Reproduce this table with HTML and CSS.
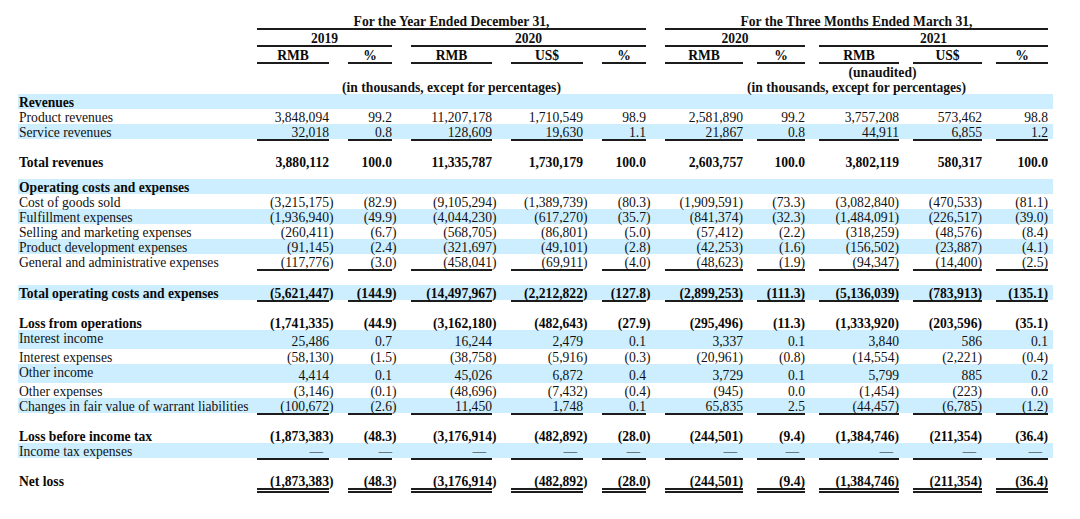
FILE: index.html
```html
<!DOCTYPE html>
<html lang="en">
<head>
<meta charset="utf-8">
<title>Consolidated Statements of Operations</title>
<link rel="stylesheet" href="styles.css">
</head>
<body>
<div class="sheet">
  <div class="hr hr1">
    <div class="hl"></div>
    <div class="hs span-year">For the Year Ended December 31,</div>
    <div class="hs span-quarter">For the Three Months Ended March 31,</div>
  </div>
  <div class="hr hr2">
    <div class="hl"></div>
    <div class="hs y2019">2019</div>
    <div class="hs y2020">2020</div>
    <div class="hs q2020">2020</div>
    <div class="hs q2021">2021</div>
  </div>
  <div class="r ul head">
    <div class="l"></div>
    <div class="v">RMB</div><div class="v">%</div><div class="v">RMB</div><div class="v">US$</div><div class="v">%</div>
    <div class="v">RMB</div><div class="v">%</div><div class="v">RMB</div><div class="v">US$</div><div class="v">%</div>
  </div>
  <div class="hr">
    <div class="hl"></div>
    <div class="hs span-year"></div>
    <div class="hs span-quarter unaudited">(unaudited)</div>
  </div>
  <div class="hr">
    <div class="hl"></div>
    <div class="hs span-year">(in thousands, except for percentages)</div>
    <div class="hs span-quarter">(in thousands, except for percentages)</div>
  </div>

  <div class="r band bold"><div class="l">Revenues</div></div>
  <div class="r">
    <div class="l">Product revenues</div>
    <div class="v">3,848,094</div><div class="v">99.2</div><div class="v">11,207,178</div><div class="v">1,710,549</div><div class="v">98.9</div>
    <div class="v">2,581,890</div><div class="v">99.2</div><div class="v">3,757,208</div><div class="v">573,462</div><div class="v">98.8</div>
  </div>
  <div class="r band ul">
    <div class="l">Service revenues</div>
    <div class="v">32,018</div><div class="v">0.8</div><div class="v">128,609</div><div class="v">19,630</div><div class="v">1.1</div>
    <div class="v">21,867</div><div class="v">0.8</div><div class="v">44,911</div><div class="v">6,855</div><div class="v">1.2</div>
  </div>
  <div class="sp sp13"></div>
  <div class="r bold">
    <div class="l">Total revenues</div>
    <div class="v">3,880,112</div><div class="v">100.0</div><div class="v">11,335,787</div><div class="v">1,730,179</div><div class="v">100.0</div>
    <div class="v">2,603,757</div><div class="v">100.0</div><div class="v">3,802,119</div><div class="v">580,317</div><div class="v">100.0</div>
  </div>
  <div class="sp sp10"></div>
  <div class="r band bold"><div class="l">Operating costs and expenses</div></div>
  <div class="r">
    <div class="l">Cost of goods sold</div>
    <div class="v">(3,215,175<span class="p">)</span></div><div class="v">(82.9<span class="p">)</span></div><div class="v">(9,105,294<span class="p">)</span></div><div class="v">(1,389,739<span class="p">)</span></div><div class="v">(80.3<span class="p">)</span></div>
    <div class="v">(1,909,591<span class="p">)</span></div><div class="v">(73.3<span class="p">)</span></div><div class="v">(3,082,840<span class="p">)</span></div><div class="v">(470,533<span class="p">)</span></div><div class="v">(81.1<span class="p">)</span></div>
  </div>
  <div class="r band">
    <div class="l">Fulfillment expenses</div>
    <div class="v">(1,936,940<span class="p">)</span></div><div class="v">(49.9<span class="p">)</span></div><div class="v">(4,044,230<span class="p">)</span></div><div class="v">(617,270<span class="p">)</span></div><div class="v">(35.7<span class="p">)</span></div>
    <div class="v">(841,374<span class="p">)</span></div><div class="v">(32.3<span class="p">)</span></div><div class="v">(1,484,091<span class="p">)</span></div><div class="v">(226,517<span class="p">)</span></div><div class="v">(39.0<span class="p">)</span></div>
  </div>
  <div class="r">
    <div class="l">Selling and marketing expenses</div>
    <div class="v">(260,411<span class="p">)</span></div><div class="v">(6.7<span class="p">)</span></div><div class="v">(568,705<span class="p">)</span></div><div class="v">(86,801<span class="p">)</span></div><div class="v">(5.0<span class="p">)</span></div>
    <div class="v">(57,412<span class="p">)</span></div><div class="v">(2.2<span class="p">)</span></div><div class="v">(318,259<span class="p">)</span></div><div class="v">(48,576<span class="p">)</span></div><div class="v">(8.4<span class="p">)</span></div>
  </div>
  <div class="r band">
    <div class="l">Product development expenses</div>
    <div class="v">(91,145<span class="p">)</span></div><div class="v">(2.4<span class="p">)</span></div><div class="v">(321,697<span class="p">)</span></div><div class="v">(49,101<span class="p">)</span></div><div class="v">(2.8<span class="p">)</span></div>
    <div class="v">(42,253<span class="p">)</span></div><div class="v">(1.6<span class="p">)</span></div><div class="v">(156,502<span class="p">)</span></div><div class="v">(23,887<span class="p">)</span></div><div class="v">(4.1<span class="p">)</span></div>
  </div>
  <div class="r ul">
    <div class="l">General and administrative expenses</div>
    <div class="v">(117,776<span class="p">)</span></div><div class="v">(3.0<span class="p">)</span></div><div class="v">(458,041<span class="p">)</span></div><div class="v">(69,911<span class="p">)</span></div><div class="v">(4.0<span class="p">)</span></div>
    <div class="v">(48,623<span class="p">)</span></div><div class="v">(1.9<span class="p">)</span></div><div class="v">(94,347<span class="p">)</span></div><div class="v">(14,400<span class="p">)</span></div><div class="v">(2.5<span class="p">)</span></div>
  </div>
  <div class="sp sp14"></div>
  <div class="r band ul bold">
    <div class="l">Total operating costs and expenses</div>
    <div class="v">(5,621,447<span class="p">)</span></div><div class="v">(144.9<span class="p">)</span></div><div class="v">(14,497,967<span class="p">)</span></div><div class="v">(2,212,822<span class="p">)</span></div><div class="v">(127.8<span class="p">)</span></div>
    <div class="v">(2,899,253<span class="p">)</span></div><div class="v">(111.3<span class="p">)</span></div><div class="v">(5,136,039<span class="p">)</span></div><div class="v">(783,913<span class="p">)</span></div><div class="v">(135.1<span class="p">)</span></div>
  </div>
  <div class="sp sp13"></div>
  <div class="r bold">
    <div class="l">Loss from operations</div>
    <div class="v">(1,741,335<span class="p">)</span></div><div class="v">(44.9<span class="p">)</span></div><div class="v">(3,162,180<span class="p">)</span></div><div class="v">(482,643<span class="p">)</span></div><div class="v">(27.9<span class="p">)</span></div>
    <div class="v">(295,496<span class="p">)</span></div><div class="v">(11.3<span class="p">)</span></div><div class="v">(1,333,920<span class="p">)</span></div><div class="v">(203,596<span class="p">)</span></div><div class="v">(35.1<span class="p">)</span></div>
  </div>
  <div class="r band tall">
    <div class="l">Interest income</div>
    <div class="v">25,486</div><div class="v">0.7</div><div class="v">16,244</div><div class="v">2,479</div><div class="v">0.1</div>
    <div class="v">3,337</div><div class="v">0.1</div><div class="v">3,840</div><div class="v">586</div><div class="v">0.1</div>
  </div>
  <div class="r">
    <div class="l">Interest expenses</div>
    <div class="v">(58,130<span class="p">)</span></div><div class="v">(1.5<span class="p">)</span></div><div class="v">(38,758<span class="p">)</span></div><div class="v">(5,916<span class="p">)</span></div><div class="v">(0.3<span class="p">)</span></div>
    <div class="v">(20,961<span class="p">)</span></div><div class="v">(0.8<span class="p">)</span></div><div class="v">(14,554<span class="p">)</span></div><div class="v">(2,221<span class="p">)</span></div><div class="v">(0.4<span class="p">)</span></div>
  </div>
  <div class="r band tall">
    <div class="l">Other income</div>
    <div class="v">4,414</div><div class="v">0.1</div><div class="v">45,026</div><div class="v">6,872</div><div class="v">0.4</div>
    <div class="v">3,729</div><div class="v">0.1</div><div class="v">5,799</div><div class="v">885</div><div class="v">0.2</div>
  </div>
  <div class="r">
    <div class="l">Other expenses</div>
    <div class="v">(3,146<span class="p">)</span></div><div class="v">(0.1<span class="p">)</span></div><div class="v">(48,696<span class="p">)</span></div><div class="v">(7,432<span class="p">)</span></div><div class="v">(0.4<span class="p">)</span></div>
    <div class="v">(945<span class="p">)</span></div><div class="v">0.0</div><div class="v">(1,454<span class="p">)</span></div><div class="v">(223<span class="p">)</span></div><div class="v">0.0</div>
  </div>
  <div class="r band ul">
    <div class="l">Changes in fair value of warrant liabilities</div>
    <div class="v">(100,672<span class="p">)</span></div><div class="v">(2.6<span class="p">)</span></div><div class="v">11,450</div><div class="v">1,748</div><div class="v">0.1</div>
    <div class="v">65,835</div><div class="v">2.5</div><div class="v">(44,457<span class="p">)</span></div><div class="v">(6,785<span class="p">)</span></div><div class="v">(1.2<span class="p">)</span></div>
  </div>
  <div class="sp sp13"></div>
  <div class="r bold">
    <div class="l">Loss before income tax</div>
    <div class="v">(1,873,383<span class="p">)</span></div><div class="v">(48.3<span class="p">)</span></div><div class="v">(3,176,914<span class="p">)</span></div><div class="v">(482,892<span class="p">)</span></div><div class="v">(28.0<span class="p">)</span></div>
    <div class="v">(244,501<span class="p">)</span></div><div class="v">(9.4<span class="p">)</span></div><div class="v">(1,384,746<span class="p">)</span></div><div class="v">(211,354<span class="p">)</span></div><div class="v">(36.4<span class="p">)</span></div>
  </div>
  <div class="r band ul dashes">
    <div class="l">Income tax expenses</div>
    <div class="v">—</div><div class="v">—</div><div class="v">—</div><div class="v">—</div><div class="v">—</div>
    <div class="v">—</div><div class="v">—</div><div class="v">—</div><div class="v">—</div><div class="v">—</div>
  </div>
  <div class="sp sp13"></div>
  <div class="r bold dbl">
    <div class="l">Net loss</div>
    <div class="v">(1,873,383<span class="p">)</span></div><div class="v">(48.3<span class="p">)</span></div><div class="v">(3,176,914<span class="p">)</span></div><div class="v">(482,892<span class="p">)</span></div><div class="v">(28.0<span class="p">)</span></div>
    <div class="v">(244,501<span class="p">)</span></div><div class="v">(9.4<span class="p">)</span></div><div class="v">(1,384,746<span class="p">)</span></div><div class="v">(211,354<span class="p">)</span></div><div class="v">(36.4<span class="p">)</span></div>
  </div>
</div>
</body>
</html>
```

FILE: styles.css
```css
* { box-sizing: border-box; }

html, body {
  margin: 0;
  padding: 0;
  background: #ffffff;
}

body {
  font-family: "Liberation Serif", "Times New Roman", serif;
  font-size: 13.6px;
  line-height: 15px;
  color: #111111;
}

.sheet {
  width: 1035px;
  margin: 13px 0 0 18px;
}

/* header rows with spanning titles */
.hr {
  display: flex;
  font-weight: bold;
  text-align: center;
  white-space: nowrap;
}
.hl { width: 239px; flex: none; }
.hs { flex: none; height: 15px; padding-top: 1px; }
.hr1 .hs, .hr2 .hs { border-bottom: 2px solid #1c1c1c; height: 17px; }
.span-year { width: 389px; }
.span-quarter { width: 383px; margin-left: 19px; }
.y2019 { width: 135px; }
.y2020 { width: 235px; margin-left: 19px; }
.q2020 { width: 140px; margin-left: 19px; }
.q2021 { width: 229px; margin-left: 14px; }
.unaudited { padding-left: 52px; }

/* data rows */
.r {
  display: flex;
  height: 15px;
  white-space: nowrap;
}
.r > div { flex: none; padding-top: 1px; }
.r .l { padding-left: 1px; }
.r .v { text-align: right; }

.r > :nth-child(1) { width: 239px; }
.r > :nth-child(2) { width: 72px; }
.r > :nth-child(3) { width: 44px; margin-left: 19px; }
.r > :nth-child(4) { width: 81px; margin-left: 19px; }
.r > :nth-child(5) { width: 72px; margin-left: 19px; }
.r > :nth-child(6) { width: 44px; margin-left: 19px; }
.r > :nth-child(7) { width: 78px; margin-left: 19px; }
.r > :nth-child(8) { width: 48px; margin-left: 14px; }
.r > :nth-child(9) { width: 80px; margin-left: 14px; }
.r > :nth-child(10) { width: 69px; margin-left: 14px; }
.r > :nth-child(11) { width: 52px; margin-left: 14px; }

/* closing parenthesis hangs outside the column in the annual block */
.r > :nth-child(-n+6) .p { margin-right: -4.5px; }

.band {
  background: linear-gradient(#cceeff, #cceeff) 0 0 / 100% 15px no-repeat;
}
.band.tall {
  height: 19px;
  background-size: 100% 19px;
}
.tall .l { align-self: flex-start; }
.tall .v { align-self: flex-end; padding-top: 0; }

.bold { font-weight: bold; color: #0a0a0a; }

.head .v { text-align: center; font-weight: bold; color: #0a0a0a; }

.ul { height: 17px; }
.ul .v { border-bottom: 2px solid #1c1c1c; }

.dbl { height: 20px; }
.dbl .v { border-bottom: 5px double #1c1c1c; }

.dashes .v { padding-right: 6px; }
.dashes > :nth-child(3) { padding-right: 0; }

.sp { height: 13px; }
.sp10 { height: 10px; }
.sp13 { height: 13px; }
.sp14 { height: 14px; }
```
